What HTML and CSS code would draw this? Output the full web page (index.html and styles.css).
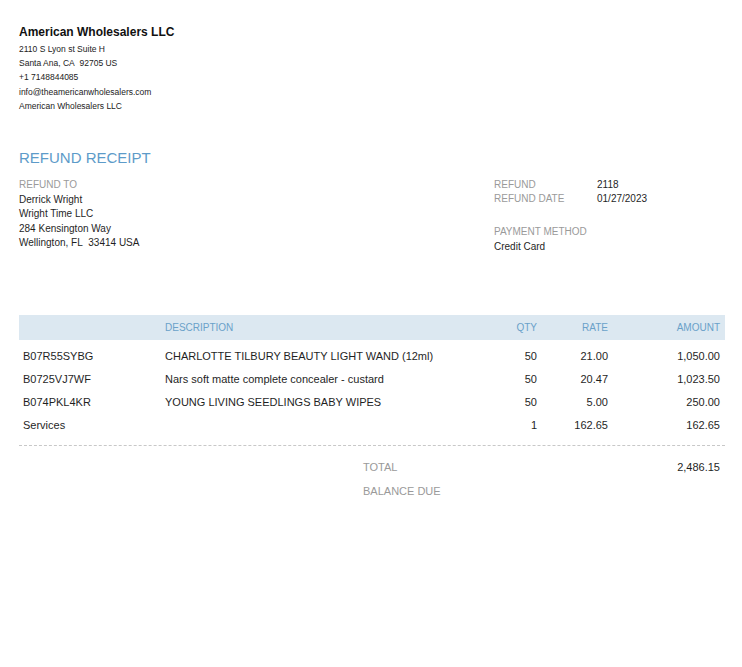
FILE: index.html
```html
<!DOCTYPE html>
<html>
<head>
<meta charset="utf-8">
<link rel="stylesheet" href="styles.css">
</head>
<body>
<div class="page">
  <header class="company">
    <div class="company-name">American Wholesalers LLC</div>
    <div class="company-info">
      <div>2110 S Lyon st Suite H</div>
      <div>Santa Ana, CA&nbsp; 92705 US</div>
      <div>+1 7148844085</div>
      <div>info@theamericanwholesalers.com</div>
      <div>American Wholesalers LLC</div>
    </div>
  </header>

  <h1 class="title">REFUND RECEIPT</h1>

  <section class="details">
    <div class="bill">
      <div class="label">REFUND TO</div>
      <div>Derrick Wright</div>
      <div>Wright Time LLC</div>
      <div>284 Kensington Way</div>
      <div>Wellington, FL&nbsp; 33414 USA</div>
    </div>
    <div class="meta">
      <div class="meta-row"><span class="label meta-label">REFUND</span><span>2118</span></div>
      <div class="meta-row"><span class="label meta-label">REFUND DATE</span><span>01/27/2023</span></div>
      <div class="payment">
        <div class="label">PAYMENT METHOD</div>
        <div>Credit Card</div>
      </div>
    </div>
  </section>

  <section class="items">
    <div class="row head">
      <span></span>
      <span>DESCRIPTION</span>
      <span class="num">QTY</span>
      <span class="num">RATE</span>
      <span class="num">AMOUNT</span>
    </div>
    <div class="body">
      <div class="row">
        <span>B07R55SYBG</span>
        <span>CHARLOTTE TILBURY BEAUTY LIGHT WAND (12ml)</span>
        <span class="num">50</span>
        <span class="num">21.00</span>
        <span class="num">1,050.00</span>
      </div>
      <div class="row">
        <span>B0725VJ7WF</span>
        <span>Nars soft matte complete concealer - custard</span>
        <span class="num">50</span>
        <span class="num">20.47</span>
        <span class="num">1,023.50</span>
      </div>
      <div class="row">
        <span>B074PKL4KR</span>
        <span>YOUNG LIVING SEEDLINGS BABY WIPES</span>
        <span class="num">50</span>
        <span class="num">5.00</span>
        <span class="num">250.00</span>
      </div>
      <div class="row">
        <span>Services</span>
        <span></span>
        <span class="num">1</span>
        <span class="num">162.65</span>
        <span class="num">162.65</span>
      </div>
    </div>
  </section>

  <section class="totals">
    <div class="total-row"><span class="label">TOTAL</span><span class="total-value">2,486.15</span></div>
    <div class="total-row"><span class="label">BALANCE DUE</span><span class="total-value"></span></div>
  </section>
</div>
</body>
</html>
```

FILE: styles.css
```css
* { box-sizing: border-box; }
html, body { margin: 0; padding: 0; background: #fff; }
body {
  font-family: "Liberation Sans", Arial, sans-serif;
  color: #1f1f1f;
  width: 742px;
  height: 667px;
  overflow: hidden;
}
.page {
  padding: 24px 17px 0 19px;
}
.company-name {
  font-size: 12px;
  font-weight: bold;
  line-height: 16px;
  color: #111;
}
.company-info {
  margin-top: 2px;
  font-size: 8.5px;
  line-height: 14.2px;
  color: #222;
}
.title {
  margin: 35px 0 0;
  font-size: 15px;
  font-weight: normal;
  line-height: 20px;
  color: #5d9bc9;
}
.label {
  color: #9a9a9a;
}
.details {
  margin-top: 10px;
  display: flex;
  justify-content: space-between;
  font-size: 10px;
  line-height: 14.5px;
}
.meta {
  width: 231px;
}
.meta-row {
  display: flex;
  line-height: 14px;
}
.meta-label {
  width: 103px;
}
.payment {
  margin-top: 18px;
  line-height: 15px;
}
.items {
  margin-top: 61px;
}
.row {
  display: grid;
  grid-template-columns: 146px 322px 55px 71px 112px;
  align-items: center;
  font-size: 11px;
  height: 23px;
}
.row > span:first-child { padding-left: 4px; }
.row .num { text-align: right; padding-right: 5px; }
.row.head {
  background: #dce8f1;
  height: 25px;
  font-size: 10px;
  color: #6aa1c9;
}
.body {
  padding-top: 4px;
  padding-bottom: 9px;
  border-bottom: 1px dashed #c8c8c8;
}
.totals {
  margin-top: 9px;
  padding-left: 344px;
}
.total-row {
  display: flex;
  justify-content: space-between;
  font-size: 11px;
  line-height: 24px;
  padding-right: 5px;
}
.total-value { color: #1f1f1f; }
```
